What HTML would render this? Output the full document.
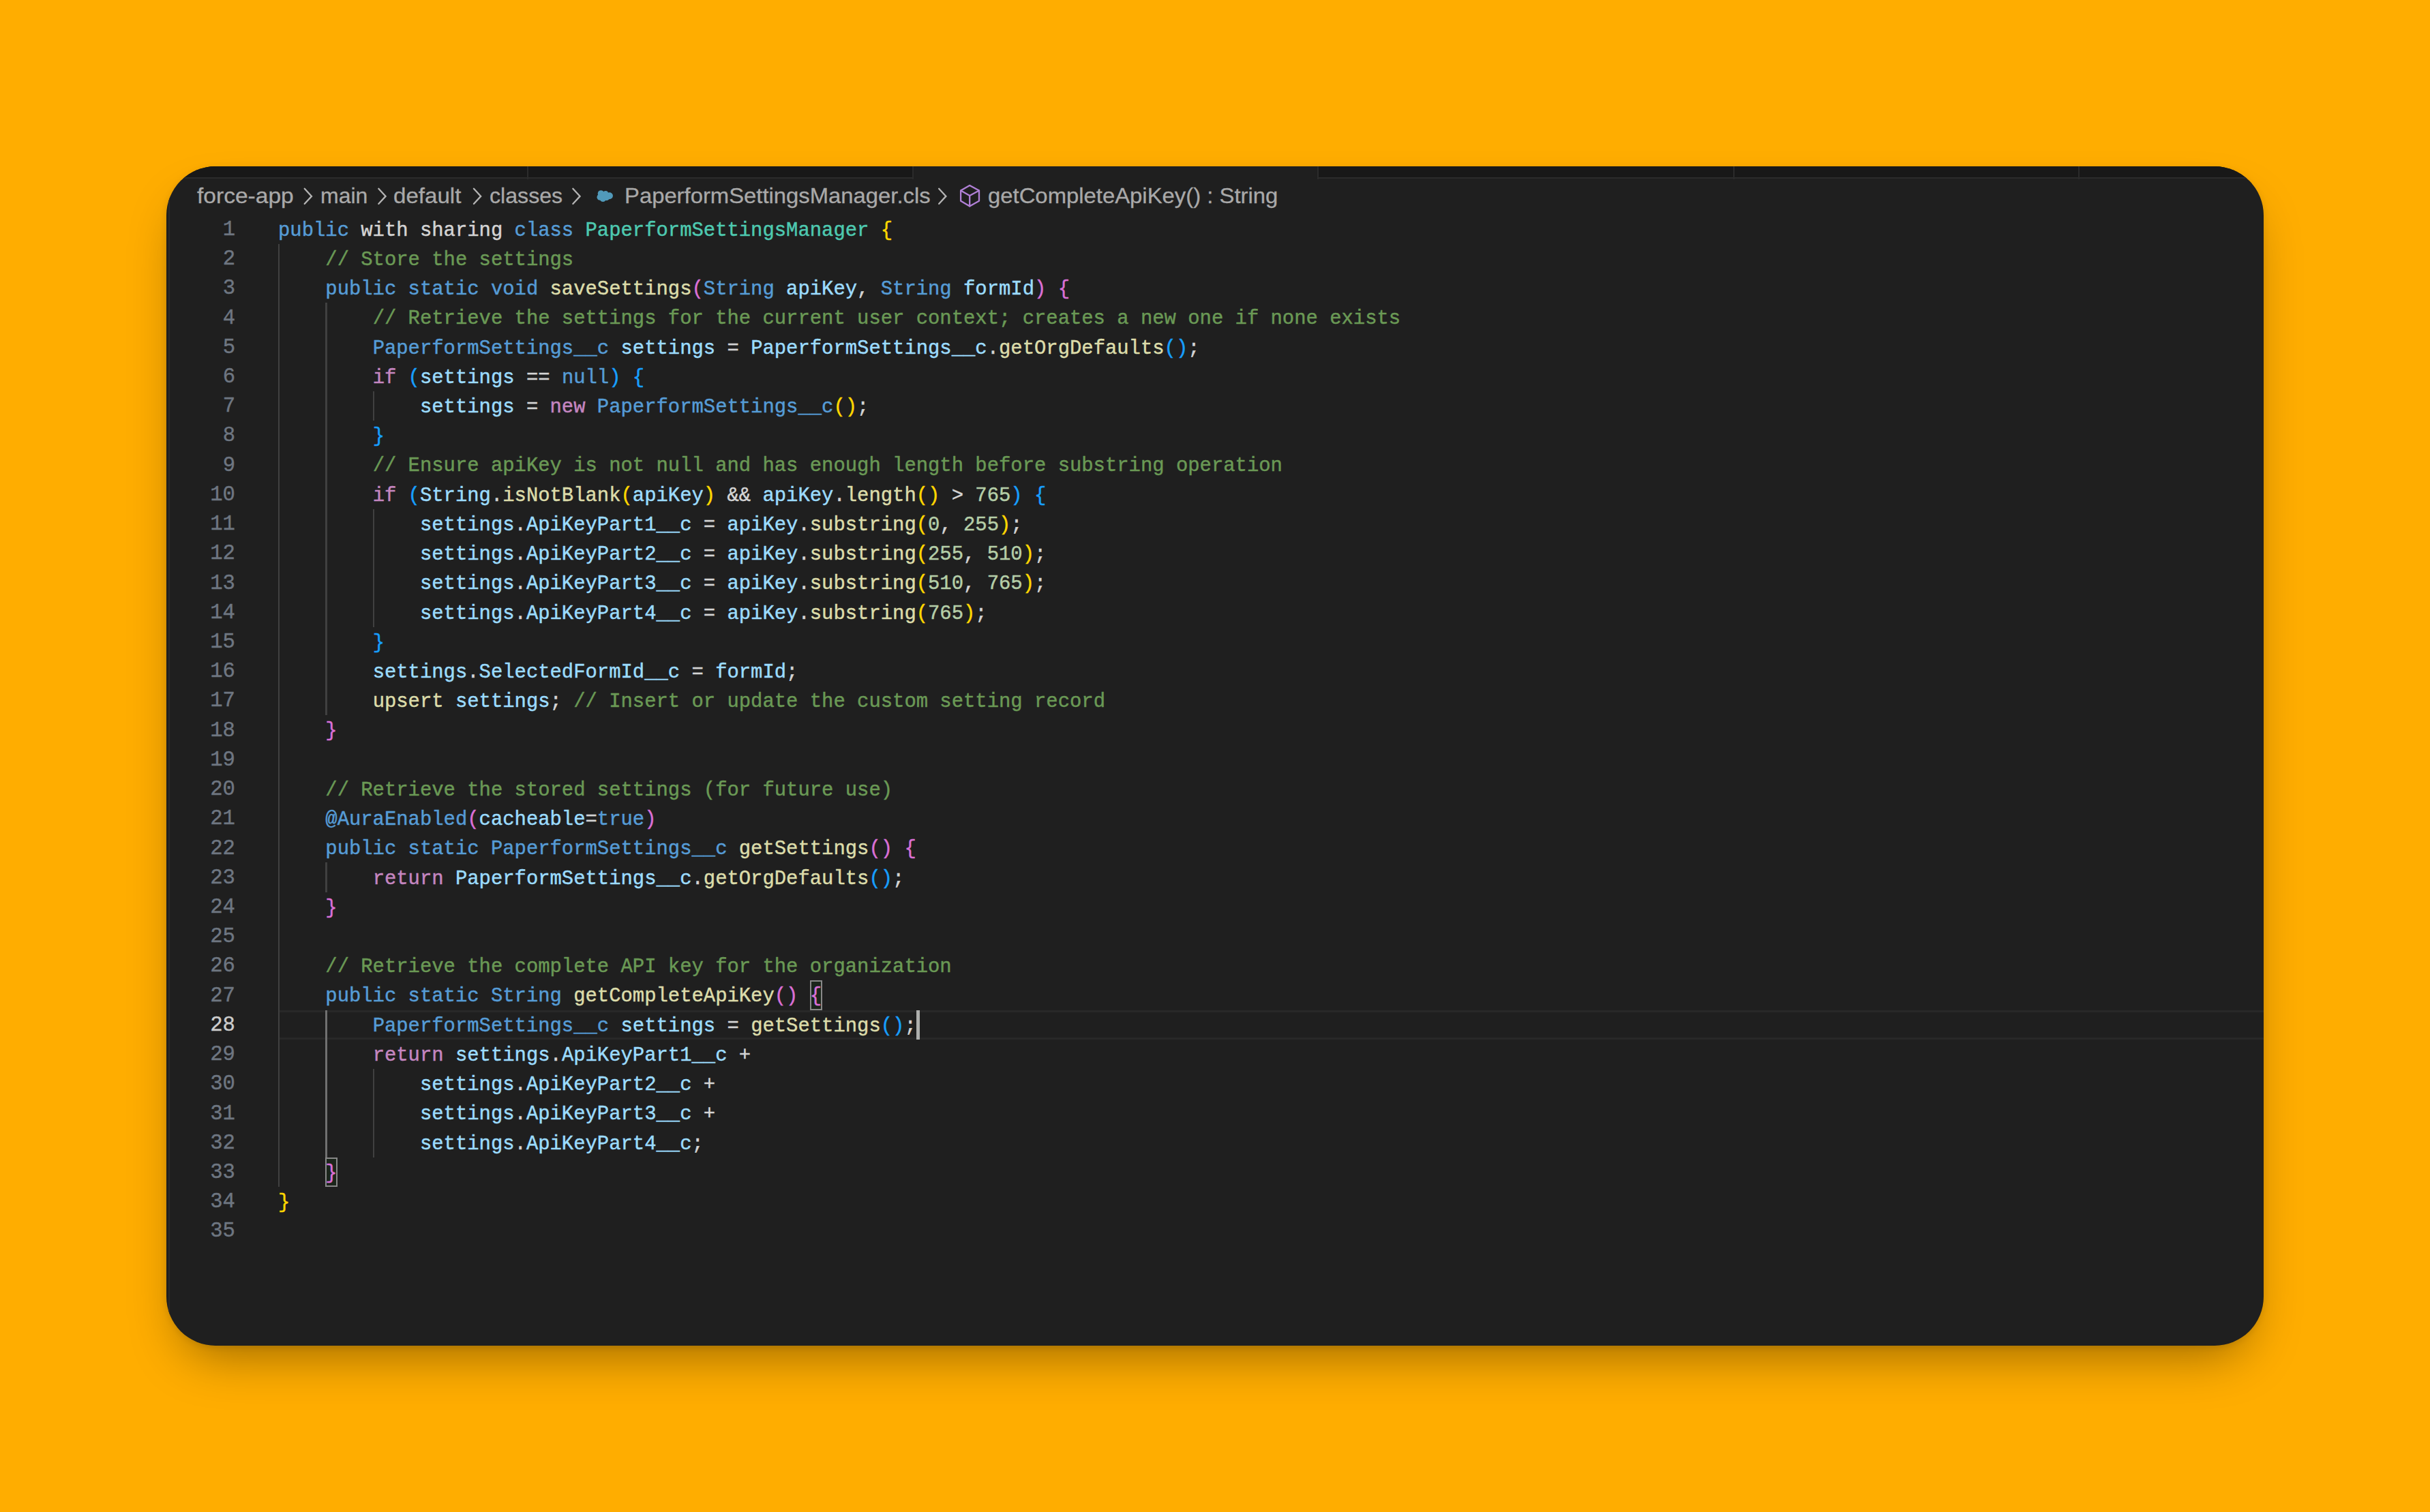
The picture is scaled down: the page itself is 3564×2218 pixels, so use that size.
<!DOCTYPE html>
<html><head><meta charset="utf-8"><style>
html,body{margin:0;padding:0;}
body{width:3564px;height:2218px;background:#ffad00;position:relative;overflow:hidden;}
.win{position:absolute;left:244px;top:244px;width:3076px;height:1730px;background:#1f1f1f;border-radius:72px;overflow:hidden;
  box-shadow:0 36px 76px -24px rgba(0,0,0,0.40),0 2px 10px rgba(0,0,0,0.10);}
.tabs{position:absolute;left:0;top:0;width:100%;height:16px;background:#181818;border-bottom:2.4px solid #2b2b2b;}
.tsep{position:absolute;top:0;width:2.4px;height:18.9px;background:#2b2b2b;}
.atab{position:absolute;top:0;left:1096px;width:592px;height:19px;background:#1f1f1f;}
.lborder{position:absolute;left:3px;top:0;width:2.4px;height:100%;background:#2b2b2b;}
.crumbs{position:absolute;left:0;top:0;height:60px;width:100%;font-family:"Liberation Sans",sans-serif;font-size:31.2px;color:#a9a9a9;white-space:nowrap;-webkit-text-stroke:0.3px currentColor;}
.crumbs span{position:absolute;top:25.7px;}
.ov{position:absolute;left:0;top:0;}
.crumbs span{transform-origin:0 0;}
.code{position:absolute;left:0;top:0;width:100%;height:100%;font-family:"Liberation Mono",monospace;font-size:28.895px;}
.ln{-webkit-text-stroke:0.45px currentColor;position:absolute;left:164px;height:43.22px;line-height:43.22px;white-space:pre;color:#d4d4d4;}
.num{-webkit-text-stroke:0.4px currentColor;position:absolute;left:0;width:101px;text-align:right;height:43.22px;line-height:43.22px;color:#6e7681;font-family:"Liberation Mono",monospace;font-size:30.629px;}
.num.cur{color:#cccccc;}
.k{color:#569cd6} .p{color:#c586c0} .f{color:#dcdcaa} .v{color:#9cdcfe} .t{color:#4ec9b0} .c{color:#6a9955} .n{color:#b5cea8}
.b1{color:#ffd700} .b2{color:#da70d6} .b3{color:#179fff}
.guide{position:absolute;width:2.4px;background:#404040;}
.guide.act{background:#707070;}
.curline{position:absolute;left:164px;right:0;border-top:3px solid #282828;border-bottom:3px solid #282828;box-sizing:border-box;}
.bbox{position:absolute;box-sizing:border-box;border:2.4px solid #888888;background:rgba(0,100,0,0.1);}
.cursor{position:absolute;width:4.8px;background:#aeafad;}
</style></head><body>
<div class="win">
<div class="tabs"></div>
<div class="atab"></div>
<div class="tsep" style="left:529px"></div><div class="tsep" style="left:1094px"></div><div class="tsep" style="left:1688px"></div><div class="tsep" style="left:2298px"></div><div class="tsep" style="left:2804px"></div>
<div class="lborder"></div>
<div class="crumbs">
<span style="left:45.1px;transform:scaleX(1.076)">force-app</span>
<span style="left:226.0px;transform:scaleX(1.025)">main</span>
<span style="left:333.2px;transform:scaleX(1.061)">default</span>
<span style="left:473.6px;transform:scaleX(1.030)">classes</span>
<span style="left:672.0px;transform:scaleX(1.052)">PaperformSettingsManager.cls</span>
<span style="left:1204.7px;transform:scaleX(1.053)">getCompleteApiKey() : String</span>
</div>
<svg class="ov" width="3076" height="1730" viewBox="244 244 3076 1730">
<g fill="none" stroke="#b4b4b4" stroke-width="2.3" stroke-linecap="round" stroke-linejoin="miter">
<path d="M446.7 276.8 L457.0 287.9 L446.7 299"/><path d="M555.3 276.8 L565.6 287.9 L555.3 299"/><path d="M694.9 276.8 L705.2 287.9 L694.9 299"/><path d="M840.3 276.8 L850.6 287.9 L840.3 299"/><path d="M1377.1 276.8 L1387.4 287.9 L1377.1 299"/>
</g>
<g fill="#519aba">
<circle cx="881.4" cy="283.9" r="4.7"/><circle cx="888.3" cy="283.9" r="3.8"/><circle cx="893.9" cy="287.2" r="5.0"/>
<circle cx="880.0" cy="289.2" r="4.5"/><circle cx="884.3" cy="291.4" r="4.6"/><circle cx="889.6" cy="289.6" r="4.6"/>
<rect x="879" y="284" width="15" height="8"/>
</g>
<g fill="none" stroke="#b180d7" stroke-width="2.3" stroke-linejoin="round" stroke-linecap="round">
<path d="M1422.2 272 L1436 279.6 L1436 294.8 L1422.2 302.6 L1409.1 294.8 L1409.1 279.6 Z"/>
<path d="M1409.1 279.6 L1422.2 287 L1436 279.6 M1422.2 287 L1422.2 302.6"/>
</g>
</svg>
<div class="code">
<div class="curline" style="top:1237.54px;height:43.22px"></div>
<div class="guide" style="left:164.00px;top:113.82px;height:1383.04px"></div><div class="guide" style="left:233.36px;top:200.26px;height:605.08px"></div><div class="guide" style="left:233.36px;top:1021.44px;height:43.22px"></div><div class="guide act" style="left:233.36px;top:1237.54px;height:216.10px"></div><div class="guide" style="left:302.72px;top:329.92px;height:43.22px"></div><div class="guide" style="left:302.72px;top:502.80px;height:172.88px"></div><div class="guide" style="left:302.72px;top:1323.98px;height:129.66px"></div>
<div class="bbox" style="left:944.30px;top:1194.32px;width:17.34px;height:43.22px"></div><div class="bbox" style="left:233.36px;top:1453.64px;width:17.34px;height:43.22px"></div>
<div class="num" style="top:71.90px">1</div><div class="num" style="top:115.12px">2</div><div class="num" style="top:158.34px">3</div><div class="num" style="top:201.56px">4</div><div class="num" style="top:244.78px">5</div><div class="num" style="top:288.00px">6</div><div class="num" style="top:331.22px">7</div><div class="num" style="top:374.44px">8</div><div class="num" style="top:417.66px">9</div><div class="num" style="top:460.88px">10</div><div class="num" style="top:504.10px">11</div><div class="num" style="top:547.32px">12</div><div class="num" style="top:590.54px">13</div><div class="num" style="top:633.76px">14</div><div class="num" style="top:676.98px">15</div><div class="num" style="top:720.20px">16</div><div class="num" style="top:763.42px">17</div><div class="num" style="top:806.64px">18</div><div class="num" style="top:849.86px">19</div><div class="num" style="top:893.08px">20</div><div class="num" style="top:936.30px">21</div><div class="num" style="top:979.52px">22</div><div class="num" style="top:1022.74px">23</div><div class="num" style="top:1065.96px">24</div><div class="num" style="top:1109.18px">25</div><div class="num" style="top:1152.40px">26</div><div class="num" style="top:1195.62px">27</div><div class="num cur" style="top:1238.84px">28</div><div class="num" style="top:1282.06px">29</div><div class="num" style="top:1325.28px">30</div><div class="num" style="top:1368.50px">31</div><div class="num" style="top:1411.72px">32</div><div class="num" style="top:1454.94px">33</div><div class="num" style="top:1498.16px">34</div><div class="num" style="top:1541.38px">35</div>
<div class="ln" style="top:72.70px"><span class="k">public</span> with sharing <span class="k">class</span> <span class="t">PaperformSettingsManager</span> <span class="b1">{</span></div><div class="ln" style="top:115.92px">    <span class="c">// Store the settings</span></div><div class="ln" style="top:159.14px">    <span class="k">public</span> <span class="k">static</span> <span class="k">void</span> <span class="f">saveSettings</span><span class="b2">(</span><span class="k">String</span> <span class="v">apiKey</span>, <span class="k">String</span> <span class="v">formId</span><span class="b2">)</span> <span class="b2">{</span></div><div class="ln" style="top:202.36px">        <span class="c">// Retrieve the settings for the current user context; creates a new one if none exists</span></div><div class="ln" style="top:245.58px">        <span class="k">PaperformSettings__c</span> <span class="v">settings</span> = <span class="v">PaperformSettings__c</span>.<span class="f">getOrgDefaults</span><span class="b3">()</span>;</div><div class="ln" style="top:288.80px">        <span class="p">if</span> <span class="b3">(</span><span class="v">settings</span> == <span class="k">null</span><span class="b3">)</span> <span class="b3">{</span></div><div class="ln" style="top:332.02px">            <span class="v">settings</span> = <span class="p">new</span> <span class="k">PaperformSettings__c</span><span class="b1">()</span>;</div><div class="ln" style="top:375.24px">        <span class="b3">}</span></div><div class="ln" style="top:418.46px">        <span class="c">// Ensure apiKey is not null and has enough length before substring operation</span></div><div class="ln" style="top:461.68px">        <span class="p">if</span> <span class="b3">(</span><span class="v">String</span>.<span class="f">isNotBlank</span><span class="b1">(</span><span class="v">apiKey</span><span class="b1">)</span> &amp;&amp; <span class="v">apiKey</span>.<span class="f">length</span><span class="b1">()</span> &gt; <span class="n">765</span><span class="b3">)</span> <span class="b3">{</span></div><div class="ln" style="top:504.90px">            <span class="v">settings</span>.<span class="v">ApiKeyPart1__c</span> = <span class="v">apiKey</span>.<span class="f">substring</span><span class="b1">(</span><span class="n">0</span>, <span class="n">255</span><span class="b1">)</span>;</div><div class="ln" style="top:548.12px">            <span class="v">settings</span>.<span class="v">ApiKeyPart2__c</span> = <span class="v">apiKey</span>.<span class="f">substring</span><span class="b1">(</span><span class="n">255</span>, <span class="n">510</span><span class="b1">)</span>;</div><div class="ln" style="top:591.34px">            <span class="v">settings</span>.<span class="v">ApiKeyPart3__c</span> = <span class="v">apiKey</span>.<span class="f">substring</span><span class="b1">(</span><span class="n">510</span>, <span class="n">765</span><span class="b1">)</span>;</div><div class="ln" style="top:634.56px">            <span class="v">settings</span>.<span class="v">ApiKeyPart4__c</span> = <span class="v">apiKey</span>.<span class="f">substring</span><span class="b1">(</span><span class="n">765</span><span class="b1">)</span>;</div><div class="ln" style="top:677.78px">        <span class="b3">}</span></div><div class="ln" style="top:721.00px">        <span class="v">settings</span>.<span class="v">SelectedFormId__c</span> = <span class="v">formId</span>;</div><div class="ln" style="top:764.22px">        <span class="f">upsert</span> <span class="v">settings</span>; <span class="c">// Insert or update the custom setting record</span></div><div class="ln" style="top:807.44px">    <span class="b2">}</span></div><div class="ln" style="top:850.66px"></div><div class="ln" style="top:893.88px">    <span class="c">// Retrieve the stored settings (for future use)</span></div><div class="ln" style="top:937.10px">    <span class="k">@AuraEnabled</span><span class="b2">(</span><span class="v">cacheable</span>=<span class="k">true</span><span class="b2">)</span></div><div class="ln" style="top:980.32px">    <span class="k">public</span> <span class="k">static</span> <span class="k">PaperformSettings__c</span> <span class="f">getSettings</span><span class="b2">()</span> <span class="b2">{</span></div><div class="ln" style="top:1023.54px">        <span class="p">return</span> <span class="v">PaperformSettings__c</span>.<span class="f">getOrgDefaults</span><span class="b3">()</span>;</div><div class="ln" style="top:1066.76px">    <span class="b2">}</span></div><div class="ln" style="top:1109.98px"></div><div class="ln" style="top:1153.20px">    <span class="c">// Retrieve the complete API key for the organization</span></div><div class="ln" style="top:1196.42px">    <span class="k">public</span> <span class="k">static</span> <span class="k">String</span> <span class="f">getCompleteApiKey</span><span class="b2">()</span> <span class="b2">{</span></div><div class="ln" style="top:1239.64px">        <span class="k">PaperformSettings__c</span> <span class="v">settings</span> = <span class="f">getSettings</span><span class="b3">()</span>;</div><div class="ln" style="top:1282.86px">        <span class="p">return</span> <span class="v">settings</span>.<span class="v">ApiKeyPart1__c</span> +</div><div class="ln" style="top:1326.08px">            <span class="v">settings</span>.<span class="v">ApiKeyPart2__c</span> +</div><div class="ln" style="top:1369.30px">            <span class="v">settings</span>.<span class="v">ApiKeyPart3__c</span> +</div><div class="ln" style="top:1412.52px">            <span class="v">settings</span>.<span class="v">ApiKeyPart4__c</span>;</div><div class="ln" style="top:1455.74px">    <span class="b2">}</span></div><div class="ln" style="top:1498.96px"><span class="b1">}</span></div><div class="ln" style="top:1542.18px"></div>
<div class="cursor" style="left:1099.86px;top:1237.54px;height:43.22px"></div>
</div>
</div>
</body></html>
